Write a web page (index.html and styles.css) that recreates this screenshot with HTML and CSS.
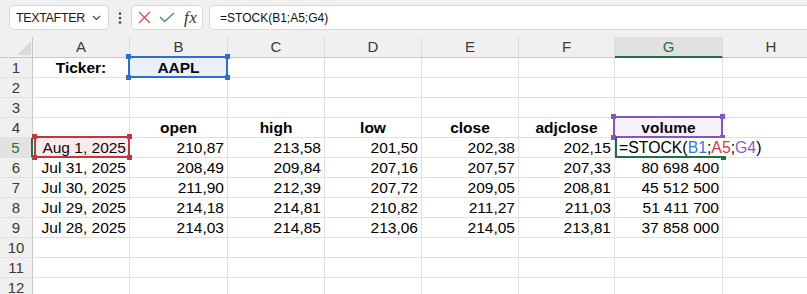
FILE: index.html
```html
<!DOCTYPE html>
<html>
<head>
<meta charset="utf-8">
<link rel="stylesheet" href="styles.css">
</head>
<body>
<div class="toolbar">
  <div class="namebox">
    <span class="nametext">TEXTAFTER</span>
    <svg class="chev" width="9" height="6" viewBox="0 0 9 6"><path d="M1 1 L4.5 4.5 L8 1" fill="none" stroke="#444" stroke-width="1.2"/></svg>
  </div>
  <div class="dots">
    <svg width="4" height="12" viewBox="0 0 4 12"><circle cx="2" cy="1.5" r="1.3" fill="#444"/><circle cx="2" cy="6" r="1.3" fill="#444"/><circle cx="2" cy="10.5" r="1.3" fill="#444"/></svg>
  </div>
  <div class="fxbox">
    <svg class="ico" width="13" height="13" viewBox="0 0 13 13"><path d="M1 1 L12 12 M12 1 L1 12" stroke="#e0474c" stroke-width="1.3" fill="none"/></svg>
    <svg class="ico" width="16" height="11" viewBox="0 0 16 11"><path d="M1 5 L5.5 9.5 L15 1" stroke="#36a05a" stroke-width="1.4" fill="none"/></svg>
    <span class="fx">fx</span>
  </div>
  <div class="formula">=STOCK(B1;A5;G4)</div>
</div>

<div class="sheet">
  <div class="corner"><svg width="33" height="20" viewBox="0 0 33 20"><polygon points="17,18 31,4 31,18" fill="#d9d9d9"/></svg></div>
  <div class="ch">A</div><div class="ch">B</div><div class="ch">C</div><div class="ch">D</div><div class="ch">E</div><div class="ch">F</div><div class="ch sel">G</div><div class="ch">H</div>

  <div class="rh">1</div>
  <div class="c ctr b">Ticker:</div>
  <div class="c ctr b">AAPL<span class="box blue"><i class="h tl"></i><i class="h tr"></i><i class="h bl"></i><i class="h br"></i></span></div>
  <div class="c"></div><div class="c"></div><div class="c"></div><div class="c"></div><div class="c"></div><div class="c"></div>

  <div class="rh">2</div>
  <div class="c"></div><div class="c"></div><div class="c"></div><div class="c"></div><div class="c"></div><div class="c"></div><div class="c"></div><div class="c"></div>

  <div class="rh">3</div>
  <div class="c"></div><div class="c"></div><div class="c"></div><div class="c"></div><div class="c"></div><div class="c"></div><div class="c"></div><div class="c"></div>

  <div class="rh">4</div>
  <div class="c"></div>
  <div class="c ctr b">open</div>
  <div class="c ctr b">high</div>
  <div class="c ctr b">low</div>
  <div class="c ctr b">close</div>
  <div class="c ctr b">adjclose</div>
  <div class="c ctr b">volume<span class="box purple"><i class="h tl"></i><i class="h tr"></i><i class="h bl"></i><i class="h br"></i></span></div>
  <div class="c"></div>

  <div class="rh sel">5</div>
  <div class="c r">Aug 1, 2025<span class="box red"><i class="h tl"></i><i class="h tr"></i><i class="h bl"></i><i class="h br"></i></span></div>
  <div class="c r">210,87</div>
  <div class="c r">213,58</div>
  <div class="c r">201,50</div>
  <div class="c r">202,38</div>
  <div class="c r">202,15</div>
  <div class="c edit"><span class="editbox"><i class="h gbr"></i></span><span class="edittext">=STOCK(<span class="fb">B1</span>;<span class="fr">A5</span>;<span class="fp">G4</span>)</span></div>
  <div class="c"></div>

  <div class="rh">6</div>
  <div class="c r">Jul 31, 2025</div>
  <div class="c r">208,49</div>
  <div class="c r">209,84</div>
  <div class="c r">207,16</div>
  <div class="c r">207,57</div>
  <div class="c r">207,33</div>
  <div class="c r">80&nbsp;698&nbsp;400</div>
  <div class="c"></div>

  <div class="rh">7</div>
  <div class="c r">Jul 30, 2025</div>
  <div class="c r">211,90</div>
  <div class="c r">212,39</div>
  <div class="c r">207,72</div>
  <div class="c r">209,05</div>
  <div class="c r">208,81</div>
  <div class="c r">45&nbsp;512&nbsp;500</div>
  <div class="c"></div>

  <div class="rh">8</div>
  <div class="c r">Jul 29, 2025</div>
  <div class="c r">214,18</div>
  <div class="c r">214,81</div>
  <div class="c r">210,82</div>
  <div class="c r">211,27</div>
  <div class="c r">211,03</div>
  <div class="c r">51&nbsp;411&nbsp;700</div>
  <div class="c"></div>

  <div class="rh">9</div>
  <div class="c r">Jul 28, 2025</div>
  <div class="c r">214,03</div>
  <div class="c r">214,85</div>
  <div class="c r">213,06</div>
  <div class="c r">214,05</div>
  <div class="c r">213,81</div>
  <div class="c r">37&nbsp;858&nbsp;000</div>
  <div class="c"></div>

  <div class="rh">10</div>
  <div class="c"></div><div class="c"></div><div class="c"></div><div class="c"></div><div class="c"></div><div class="c"></div><div class="c"></div><div class="c"></div>

  <div class="rh">11</div>
  <div class="c"></div><div class="c"></div><div class="c"></div><div class="c"></div><div class="c"></div><div class="c"></div><div class="c"></div><div class="c"></div>

  <div class="rh">12</div>
  <div class="c"></div><div class="c"></div><div class="c"></div><div class="c"></div><div class="c"></div><div class="c"></div><div class="c"></div><div class="c"></div>
</div>
</body>
</html>
```

FILE: styles.css
```css
html, body {
  margin: 0;
  padding: 0;
  background: #ffffff;
  overflow: hidden;
  width: 807px;
  height: 294px;
}

body {
  font-family: "Liberation Sans", Arial, sans-serif;
}

.toolbar {
  height: 37px;
  box-sizing: border-box;
  background: #f0f0f0;
  display: flex;
  align-items: flex-start;
  padding: 5px 0 0 9px;
  overflow: hidden;
}

.namebox {
  width: 100px;
  height: 25px;
  box-sizing: border-box;
  background: #ffffff;
  border: 1px solid #d9d9d9;
  border-radius: 5px;
  display: flex;
  align-items: center;
  padding: 0 0 0 6px;
}

.nametext {
  font-size: 12.5px;
  letter-spacing: -0.35px;
  color: #1a1a1a;
  flex: 1;
}

.chev {
  margin-right: 7px;
}

.dots {
  width: 22px;
  height: 25px;
  display: flex;
  align-items: center;
  justify-content: center;
}

.fxbox {
  width: 72px;
  height: 25px;
  box-sizing: border-box;
  background: #ffffff;
  border: 1px solid #d9d9d9;
  border-radius: 5px;
  display: flex;
  align-items: center;
  padding: 0 0 0 6px;
  gap: 8px;
}

.fx {
  font-family: "Liberation Serif", "Times New Roman", serif;
  font-style: italic;
  font-size: 17px;
  color: #333;
  margin-left: 1px;
  line-height: 1;
  letter-spacing: 0.5px;
}

.formula {
  flex: 1;
  margin-left: 6px;
  margin-right: -10px;
  height: 25px;
  box-sizing: border-box;
  background: #ffffff;
  border: 1px solid #d9d9d9;
  border-radius: 5px;
  display: flex;
  align-items: center;
  padding-left: 10px;
  font-size: 12px;
  color: #111;
}

.sheet {
  display: grid;
  grid-template-columns: 33px 97px 98px 97px 97px 97px 96px 108px 97px;
  grid-template-rows: 21px;
  grid-auto-rows: 20px;
  width: 820px;
}

.corner {
  background: #f0f0f0;
  border-right: 1px solid #c8c8c8;
  border-bottom: 1px solid #c8c8c8;
  box-sizing: border-box;
  overflow: hidden;
}

.corner svg {
  display: block;
}

.ch {
  background: #f0f0f0;
  border-right: 1px solid #dcdcdc;
  border-bottom: 1px solid #c8c8c8;
  box-sizing: border-box;
  text-align: center;
  font-size: 15px;
  line-height: 20px;
  color: #3a3a3a;
}

.ch.sel {
  background: #e1e1e1;
  border-bottom: 2px solid #1f7145;
  color: #1f7145;
  line-height: 19px;
}

.rh {
  background: #f0f0f0;
  border-right: 1px solid #c8c8c8;
  border-bottom: 1px solid #e1e1e1;
  box-sizing: border-box;
  text-align: center;
  font-size: 15px;
  line-height: 19px;
  color: #3a3a3a;
}

.rh.sel {
  background: #e2e2e2;
  border-right: 2px solid #1f7145;
  color: #1f7145;
}

.c {
  position: relative;
  border-right: 1px solid #e1e1e1;
  border-bottom: 1px solid #e1e1e1;
  box-sizing: border-box;
  font-size: 15.5px;
  line-height: 19px;
  color: #000;
  white-space: nowrap;
  padding: 0 3px;
}

.r {
  text-align: right;
}

.ctr {
  text-align: center;
}

.b {
  font-weight: bold;
}

.box {
  position: absolute;
  left: -2px;
  top: -2px;
  right: -1px;
  bottom: -1px;
  border: 2px solid;
  z-index: 2;
}

.box.blue {
  border-color: #2f6fcc;
  background: rgba(47, 111, 204, 0.1);
}

.box.red {
  left: 1px;
  border-color: #c4363f;
  background: rgba(196, 54, 63, 0.1);
}

.box.purple {
  border-color: #8656c0;
  background: rgba(134, 86, 192, 0.08);
}

.h {
  position: absolute;
  width: 5px;
  height: 5px;
  background: inherit;
}

.blue .h { background: #2f6fcc; }
.red .h { background: #c4363f; }
.purple .h { background: #8656c0; }

.h.tl { left: -4px; top: -4px; }
.h.tr { right: -4px; top: -4px; }
.h.bl { left: -4px; bottom: -4px; }
.h.br { right: -4px; bottom: -4px; }

.edit {
  border-right-color: transparent;
  overflow: visible;
  z-index: 3;
}

.editbox {
  position: absolute;
  left: 0;
  top: -1px;
  right: -2px;
  bottom: -1px;
  border-left: 2px solid #1f7145;
  border-bottom: 2px solid #1f7145;
}

.h.gbr {
  right: -2px;
  bottom: -4px;
  background: #1f7145;
}

.edittext {
  position: absolute;
  left: 2px;
  top: 0;
  height: 18px;
  padding: 0 3px 0 2px;
  background: #ffffff;
  font-size: 15.8px;
  line-height: 19px;
  color: #000;
}

.fb { color: #3b78d6; }
.fr { color: #d53a40; }
.fp { color: #8a5ec8; }
```
